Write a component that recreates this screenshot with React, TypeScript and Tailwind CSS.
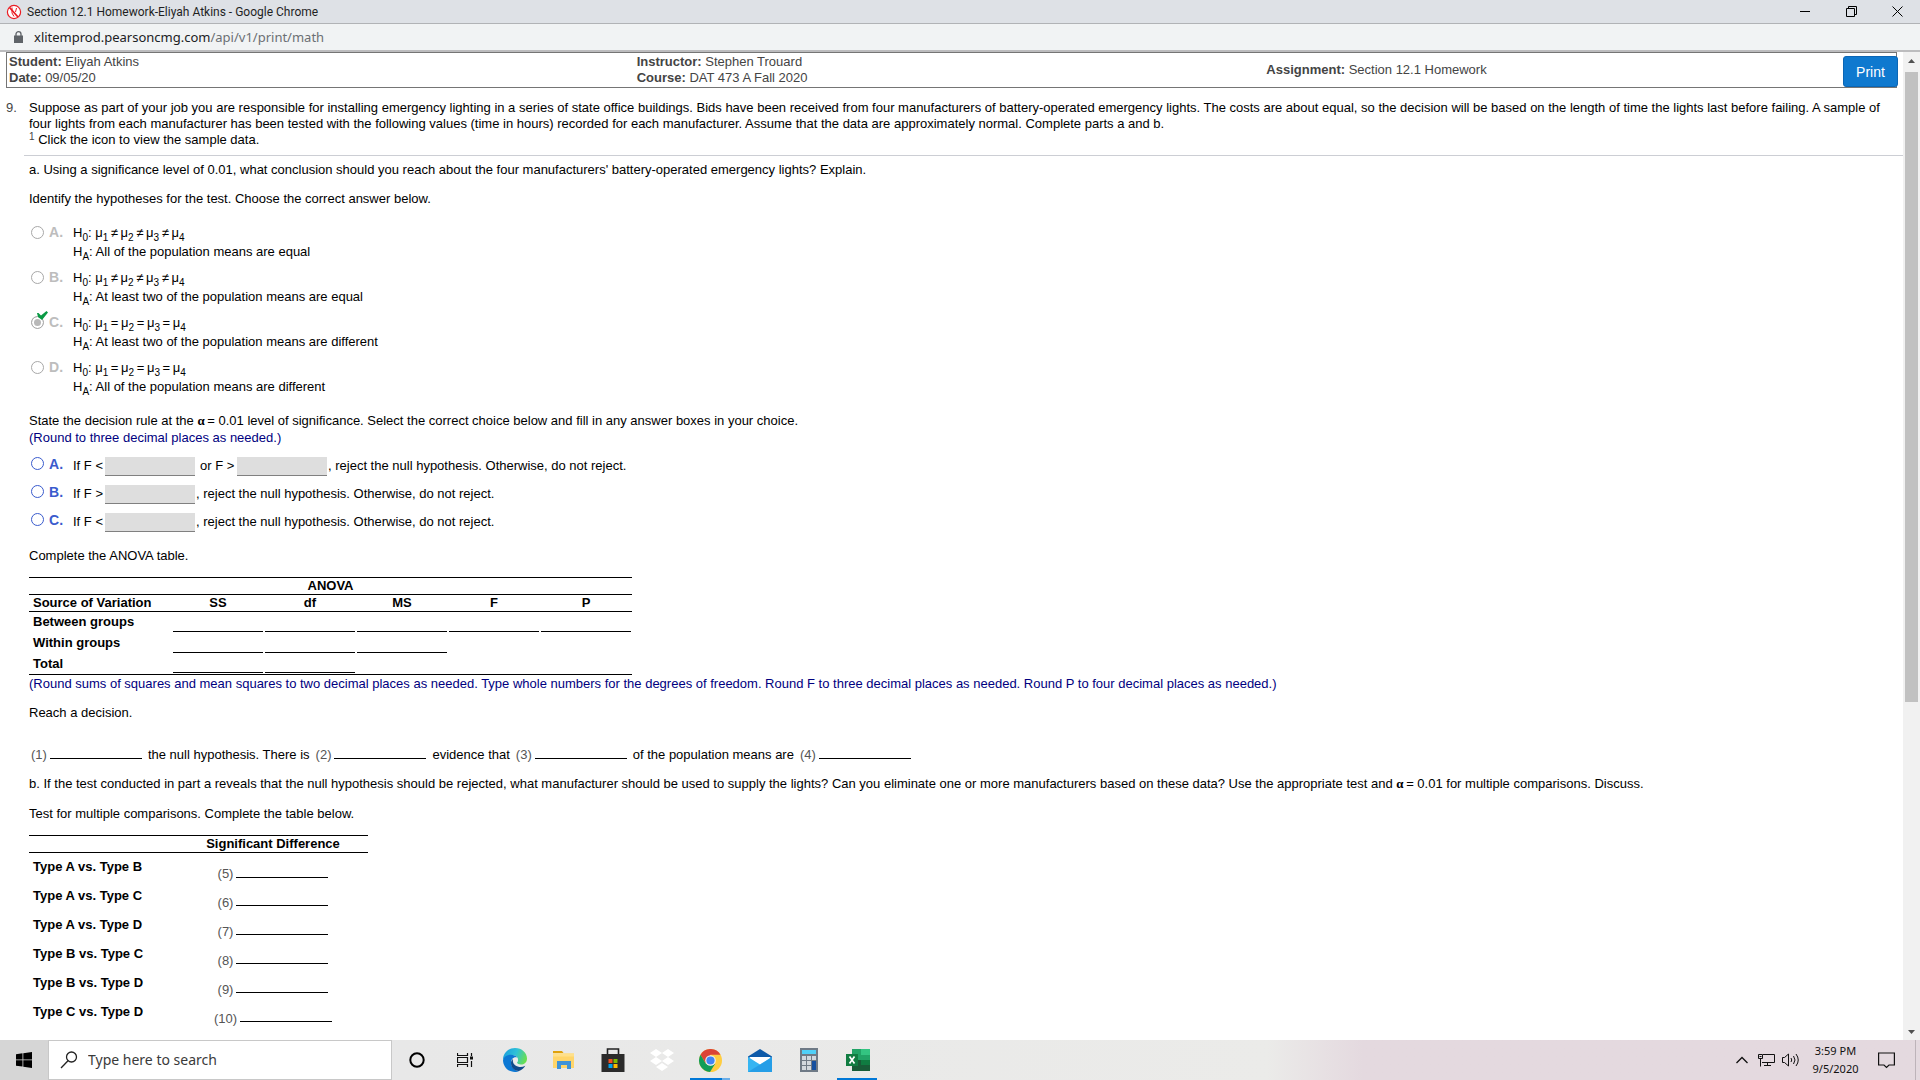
import type { ReactNode } from "react";

const anovaColumns = ["SS", "df", "MS", "F", "P"];
const anovaRows = [
  { label: "Between groups", blanks: 5 },
  { label: "Within groups", blanks: 3 },
  { label: "Total", blanks: 2 },
];
const hypotheses = [
  { letter: "A", sign: "≠", text: "All of the population means are equal" },
  { letter: "B", sign: "≠", text: "At least two of the population means are equal" },
  { letter: "C", sign: "=", text: "At least two of the population means are different", correct: true },
  { letter: "D", sign: "=", text: "All of the population means are different" },
];
const comparisons = [
  "Type A vs. Type B",
  "Type A vs. Type C",
  "Type A vs. Type D",
  "Type B vs. Type C",
  "Type B vs. Type D",
  "Type C vs. Type D",
];

function TitleBar() {
  return (
    <header className="flex h-6 shrink-0 items-center border-b border-[#b1b3b6] bg-[#dee1e6] pl-[6px] font-[Roboto,sans-serif] text-xs text-[#1f1f1f]">
      <svg viewBox="0 0 16 16" className="size-4" fill="none" stroke="#ea1d24">
        <circle cx="8" cy="8" r="6.6" strokeWidth="1.2" fill="#fff" />
        <path d="M3.5 3.500 12 13" strokeWidth="1.8" />
        <path d="M6 3.500v5.500l2 3.500M10.500 4 9.500 8" strokeWidth="1" />
      </svg>
      <h1 className="ml-[5px] flex-1">Section 12.1 Homework-Eliyah Atkins - Google Chrome</h1>
      <div className="flex h-full items-center text-black">
        <button aria-label="Minimize" className="flex w-[46px] justify-center">
          <svg width="10" height="10" viewBox="0 0 10 10" stroke="currentColor"><path d="M0 4.5h10" /></svg>
        </button>
        <button aria-label="Restore" className="flex w-[46px] justify-center">
          <svg width="11" height="11" viewBox="0 0 11 11" stroke="currentColor" fill="none">
            <path d="M.5 2.5h8v8h-8zM2.5 2.5v-2h8v8h-2" />
          </svg>
        </button>
        <button aria-label="Close" className="flex w-[46px] justify-center">
          <svg width="11" height="11" viewBox="0 0 11 11" stroke="currentColor"><path d="M.5.5l10 10M10.5.5l-10 10" /></svg>
        </button>
      </div>
    </header>
  );
}

function AddressBar() {
  return (
    <div className="flex h-7 shrink-0 items-center border-b-2 border-[#bcbcbe] bg-[#f1f3f4] pl-[14px] font-['Noto_Sans',sans-serif] text-[13px] text-[#202124]">
      <svg viewBox="0 0 9 12" className="h-3 w-[9px]" fill="none">
        <path d="M0 4.5h9V12H0z" fill="#5f6368" />
        <path d="M2 5V3a2.5 2.3 0 0 1 5 0v2" stroke="#5f6368" strokeWidth="1.3" />
      </svg>
      <p className="ml-[11px]">
        xlitemprod.pearsoncmg.com<span className="text-[#6b6f73]">/api/v1/print/math</span>
      </p>
    </div>
  );
}

function DocumentHeader() {
  return (
    <div className="mr-[6px] ml-[6px] flex h-9 items-start border border-[#757575] text-[#444]">
      <div className="w-1/3 pt-px pl-[2px]">
        <p><b>Student:</b> Eliyah Atkins</p>
        <p><b>Date:</b> 09/05/20</p>
      </div>
      <div className="w-1/3 pt-px">
        <p><b>Instructor:</b> Stephen Trouard</p>
        <p><b>Course:</b> DAT 473 A Fall 2020</p>
      </div>
      <p className="flex-1 pt-[9px]"><b>Assignment:</b> Section 12.1 Homework</p>
      <button className="-mr-[2px] mt-[3px] h-[31px] w-[55px] shrink-0 rounded-[3px] border border-[#0b66b5] bg-[#0f79cf] text-sm text-white">
        Print
      </button>
    </div>
  );
}

function Sub({ children }: { children: ReactNode }) {
  return <sub className="bottom-[-4px] text-[10px]">{children}</sub>;
}

function Means({ sign }: { sign: string }) {
  const gap = `\u2009${sign}\u2009`;
  return (
    <>
      H<Sub>0</Sub>: μ<Sub>1</Sub>{gap}μ<Sub>2</Sub>{gap}μ<Sub>3</Sub>{gap}μ<Sub>4</Sub>
    </>
  );
}

function HypothesisOption({ letter, sign, text, correct }: { letter: string; sign: string; text: string; correct?: boolean }) {
  return (
    <label className="flex h-[45px] items-start">
      <span className="relative mt-[3px] mr-[5px] ml-[2px] size-[13px]">
        <input
          type="radio"
          name="hypothesis"
          disabled
          defaultChecked={correct}
          className="block size-[13px] appearance-none rounded-full border border-[#a8a8a8] bg-white checked:bg-[#b8b8b8] checked:shadow-[inset_0_0_0_2px_white]"
        />
        {correct && (
          <svg viewBox="0 0 11 10" className="absolute -top-[5px] left-[6px] h-[10px] w-[11px]">
            <path d="M0 2l1.500 0 2.500 2.500L9.500 0l1.500 1.500L5 9 1 6z" fill="#0a9a44" />
          </svg>
        )}
      </span>
      <b className="w-6 text-sm leading-[19px] text-[#bdbdbd]">{letter}.</b>
      <span className="leading-[19px]">
        <Means sign={sign} />
        <br />
        H<Sub>A</Sub>: {text}
      </span>
    </label>
  );
}

function AnswerBox({ label }: { label: string }) {
  return <input type="text" aria-label={label} className="h-[19px] w-[90px] border-b border-[#808080] bg-[#dedede]" />;
}

function RuleOption({ letter, children }: { letter: string; children: ReactNode }) {
  return (
    <div className="flex h-7 items-center">
      <input
        type="radio"
        name="rule"
        aria-label={`Choice ${letter}`}
        className="mr-[5px] mb-[5px] ml-[2px] size-[13px] appearance-none rounded-full border border-[#3a5bcd] bg-white"
      />
      <b className="mb-[5px] w-6 text-sm leading-4 text-[#3a5bcd]">{letter}.</b>
      {children}
    </div>
  );
}

function Choice({ n }: { n: number }) {
  return (
    <label className="inline-flex items-center text-[#555]">
      ({n})
      <input type="text" className="ml-[3px] h-2 w-[92px] border-b border-black" />
    </label>
  );
}

function Alpha() {
  return <b className="font-['Liberation_Serif',serif]">α</b>;
}

function Question() {
  return (
    <main className="flex-1 bg-white text-black">
      <DocumentHeader />
      <div className="mt-3 flex pl-[6px]">
        <span className="w-[23px] text-[#444]">9.</span>
        <div className="flex-1 pr-2">
          <p>
            Suppose as part of your job you are responsible for installing emergency lighting in a series of state office
            buildings. Bids have been received from four manufacturers of battery-operated emergency lights. The costs are
            about equal, so the decision will be based on the length of time the lights last before failing. A sample of
            four lights from each manufacturer has been tested with the following values (time in hours) recorded for each
            manufacturer. Assume that the data are approximately normal. Complete parts a and b.
          </p>
          <p className="h-4">
            <sup className="-top-1 text-[10px] text-[#444]">1</sup> Click the icon to view the sample data.
          </p>
        </div>
      </div>
      <hr className="mt-[7px] ml-6 border-[#ccced4]" />
      <div className="pt-[6px] pl-[29px]">
        <p>
          a. Using a significance level of 0.01, what conclusion should you reach about the four manufacturers'
          battery-operated emergency lights? Explain.
        </p>
        <p className="mt-[13px]">Identify the hypotheses for the test. Choose the correct answer below.</p>
        <fieldset className="mt-4">
          {hypotheses.map((h) => (
            <HypothesisOption key={h.letter} {...h} />
          ))}
        </fieldset>
        <p className="mt-[10px]">
          State the decision rule at the <Alpha />{"\u2009"}= 0.01 level of significance. Select the correct choice below and
          fill in any answer boxes in your choice.
        </p>
        <p className="mt-px text-[#000080]">(Round to three decimal places as needed.)</p>
        <fieldset className="mt-[6px]">
          <RuleOption letter="A">
            <span className="w-8">If F &lt;</span>
            <AnswerBox label="Lower critical value" />
            <span className="w-[42px] pl-[5px]">or F &gt;</span>
            <AnswerBox label="Upper critical value" />
            <span className="pl-px">, reject the null hypothesis. Otherwise, do not reject.</span>
          </RuleOption>
          <RuleOption letter="B">
            <span className="w-8">If F &gt;</span>
            <AnswerBox label="Critical value" />
            <span className="pl-px">, reject the null hypothesis. Otherwise, do not reject.</span>
          </RuleOption>
          <RuleOption letter="C">
            <span className="w-8">If F &lt;</span>
            <AnswerBox label="Critical value" />
            <span className="pl-px">, reject the null hypothesis. Otherwise, do not reject.</span>
          </RuleOption>
        </fieldset>
        <p className="mt-3">Complete the ANOVA table.</p>
        <table className="mt-[13px] w-[603px] table-fixed border-collapse border-y border-black font-bold">
          <colgroup>
            <col className="w-[143px]" />
            <col span={5} />
          </colgroup>
          <thead>
            <tr className="border-b border-black">
              <th colSpan={6} className="h-[17px] leading-4">ANOVA</th>
            </tr>
            <tr className="border-b border-black">
              <th className="h-[17px] pl-1 text-left leading-4">Source of Variation</th>
              {anovaColumns.map((c) => (
                <th key={c} className="leading-4">{c}</th>
              ))}
            </tr>
          </thead>
          <tbody>
            {anovaRows.map((row) => (
              <tr key={row.label} className="h-[21px]">
                <th className="pl-1 text-left">{row.label}</th>
                {anovaColumns.map((c, i) => (
                  <td key={c} className="p-0 align-bottom">
                    {i < row.blanks && (
                      <input type="text" aria-label={`${row.label} ${c}`} className="mx-auto mb-px block h-4 w-[90px] border-b border-black" />
                    )}
                  </td>
                ))}
              </tr>
            ))}
          </tbody>
        </table>
        <p className="mt-px text-[#000080]">
          (Round sums of squares and mean squares to two decimal places as needed. Type whole numbers for the degrees of
          freedom. Round F to three decimal places as needed. Round P to four decimal places as needed.)
        </p>
        <p className="mt-[13px]">Reach a decision.</p>
        <div className="mt-[26px] flex items-center gap-[6px] pl-[2px]">
          <Choice n={1} /> the null hypothesis. There is <Choice n={2} /> evidence that <Choice n={3} /> of the population
          means are <Choice n={4} />
        </div>
        <p className="mt-[13px]">
          b. If the test conducted in part a reveals that the null hypothesis should be rejected, what manufacturer should be
          used to supply the lights? Can you eliminate one or more manufacturers based on these data? Use the appropriate test
          and <Alpha />{"\u2009"}= 0.01 for multiple comparisons. Discuss.
        </p>
        <p className="mt-[14px]">Test for multiple comparisons. Complete the table below.</p>
        <table className="mt-[13px] w-[339px] table-fixed border-collapse">
          <colgroup>
            <col className="w-[149px]" />
            <col />
          </colgroup>
          <thead>
            <tr className="border-y border-black">
              <td className="h-[17px]" />
              <th className="leading-4">Significant Difference</th>
            </tr>
          </thead>
          <tbody>
            {comparisons.map((c, i) => (
              <tr key={c} className="h-[29px]">
                <th className="pt-[6px] pl-1 text-left align-top">{c}</th>
                <td className="pt-[13px] text-center align-top leading-[15px]">
                  <Choice n={i + 5} />
                </td>
              </tr>
            ))}
          </tbody>
        </table>
      </div>
    </main>
  );
}

function ScrollBar() {
  return (
    <div className="flex w-[17px] shrink-0 flex-col items-center bg-[#f1f1f1]">
      <svg viewBox="0 0 17 20" className="h-5 w-[17px]"><path d="M5 11h7L8.500 7z" fill="#505050" /></svg>
      <div className="w-[13px] flex-[631] bg-[#c1c1c1]" />
      <div className="flex-[321]" />
      <svg viewBox="0 0 17 17" className="size-[17px]"><path d="M5 7h7l-3.500 4z" fill="#505050" /></svg>
    </div>
  );
}

function AppButton({ label, active, children }: { label: string; active?: string; children: ReactNode }) {
  return (
    <button aria-label={label} className="relative flex h-full w-[49px] items-center justify-center">
      {children}
      {active && <span className={active} />}
    </button>
  );
}

function Taskbar() {
  return (
    <footer className="flex h-10 shrink-0 items-center bg-linear-to-r from-[#e8e8e8] from-20% via-[#ebebe9] via-66% to-[#e4d9df] to-71% font-['Noto_Sans',sans-serif]">
      <button aria-label="Start" className="flex h-full w-12 items-center justify-center bg-[#d6d6d6]">
        <svg viewBox="0 0 16 16" className="size-4"><path d="M0 2.200 6.500 1.300v6.200H0zM7.300 1.200 16 0v7.500H7.300zM0 8.300h6.500v6.300L0 13.700zM7.300 8.300H16V16l-8.700-1.200z" /></svg>
      </button>
      <label className="flex h-full w-[344px] items-center border border-[#c8c8c8] bg-white pl-[11px]">
        <svg viewBox="0 0 18 18" className="size-[18px]" fill="none" stroke="#222" strokeWidth="1.300">
          <circle cx="11.500" cy="6" r="5" />
          <path d="M8 9.800 1 17" />
        </svg>
        <input type="text" aria-label="Search" placeholder="Type here to search" className="ml-[10px] flex-1 text-sm outline-none placeholder:text-[#3a3a3a]" />
      </label>
      <AppButton label="Cortana">
        <svg viewBox="0 0 16 16" className="size-4"><circle cx="8" cy="8" r="6.700" fill="none" stroke="#000" strokeWidth="2" /></svg>
      </AppButton>
      <AppButton label="Task View">
        <svg viewBox="0 0 17 16" className="h-4 w-[17px]" fill="none" stroke="#111">
          <path d="M.5 1v2.500h10V1M.5 15v-2.500h10V15M.5 5.500h10v5H.5zM14.500 1v3M14.500 9v6" strokeWidth="1.200" />
          <path d="M13 4.500h3v3h-3z" fill="#111" stroke="none" />
        </svg>
      </AppButton>
      <AppButton label="Edge">
        <svg viewBox="0 0 24 24" className="size-6">
          <defs>
            <linearGradient id="edgeTop" x1="0" x2="1" y1=".3" y2=".6">
              <stop stopColor="#1ba0dd" /><stop offset=".5" stopColor="#2fc1d8" /><stop offset="1" stopColor="#6be04c" />
            </linearGradient>
          </defs>
          <path d="M0 12C0 5 5.500 0 12 0c7 0 12 5 12 10.500 0 4-3 6-6 6-2.500 0-4-1-4-2 0-.7 1-1.300 1-3 0-2-2-4.500-6-4.500-4 0-7.500 1.800-9 5z" fill="url(#edgeTop)" />
          <path d="M0 12c1-3.300 4-5.200 8-5.200 2.500 0 5 1 6.300 2.700C11 8.500 8 11 8 14.500c0 5 4 8.500 8 8.500-1 .6-2.500 1-4 1C5 24 0 18.500 0 12z" fill="#0c78d4" />
          <path d="M10 11c-1.200 1-2 2.200-2 4 0 5 4 8.300 8 8 3-1 5.200-3.200 6.300-5.300-2 1.100-4 1.400-6 1.200C12 18.500 9 15 10 11z" fill="#114a8b" />
          <path d="M11 10c2-1 4 .5 4 2s-1 2-1 2.800c0 1.500 2.500 2.700 5.500 2.200-5 2-10-1.500-8.500-7z" fill="#ececec" />
        </svg>
      </AppButton>
      <AppButton label="File Explorer">
        <svg viewBox="0 0 22 18" className="h-[18px] w-[22px]">
          <path d="M0 0h9l1.500 2H0z" fill="#dfa10b" /><path d="M0 2.500h21V17H0z" fill="#ffd56a" />
          <path d="M0 2.500h21v3H0z" fill="#ffe08a" /><path d="M4 10h14v8h-4v-4H8v4H4z" fill="#3f93d8" />
        </svg>
      </AppButton>
      <AppButton label="Microsoft Store">
        <svg viewBox="0 0 24 24" className="size-6">
          <path d="M6.500 7V1h11v6" fill="none" stroke="#222" strokeWidth="1.600" /><path d="M.5 6h23v18H.5z" fill="#2b2b2b" />
          <path d="M7.500 11h4v4h-4z" fill="#f25022" /><path d="M12.500 11h4v4h-4z" fill="#7fba00" />
          <path d="M7.500 16h4v4h-4z" fill="#00a4ef" /><path d="M12.500 16h4v4h-4z" fill="#ffb900" />
        </svg>
      </AppButton>
      <AppButton label="Dropbox">
        <svg viewBox="0 0 24 22" className="h-[22px] w-6" fill="#fff">
          <path d="M6 0l6 4-6 4-6-4zM18 0l6 4-6 4-6-4zM6 8l6 4-6 4-6-4zM18 8l6 4-6 4-6-4zM12 14l6 4-6 4-6-4z" />
        </svg>
      </AppButton>
      <AppButton label="Chrome" active="absolute bottom-0 left-1 h-[2px] w-10 border-r-8 border-[#6aaee8] bg-[#0078d7]">
        <svg viewBox="0 0 24 24" className="size-[23px]">
          <circle cx="12" cy="12" r="12" fill="#ffcd40" />
          <path d="M1.600 6A12 12 0 0 1 22.400 6H12L7 15z" fill="#db4437" />
          <path d="M1.600 6A12 12 0 0 0 11.500 24L17 15 12 17l-5-2z" fill="#109d58" />
          <circle cx="12" cy="12" r="5.500" fill="#f1f1f1" /><circle cx="12" cy="12" r="4.300" fill="#4285f4" />
        </svg>
      </AppButton>
      <AppButton label="Mail">
        <svg viewBox="0 0 24 23" className="h-[23px] w-6">
          <path d="M0 7.500 12 0l12 7.500V9H0z" fill="#0d5aa8" /><path d="M1 8h22L12 17z" fill="#fff" />
          <path d="M0 8l12 7.500L24 8v15H0z" fill="#35b5f2" /><path d="M24 8v15H0z" fill="#1a8fe0" opacity=".6" />
        </svg>
      </AppButton>
      <AppButton label="Calculator">
        <svg viewBox="0 0 18 24" className="h-6 w-[18px]">
          <path d="M0 0h18v24H0z" fill="#6f7a86" /><path d="M2 2h14v4H2z" fill="#50d0f8" />
          <path d="M2 8h4v4H2zM7 8h4v4H7zM12 8h4v4h-4zM2 13h4v4H2zM7 13h4v4H7zM2 18h4v4H2zM7 18h4v4H7z" fill="#d2d8de" />
          <path d="M12 13h4v9h-4z" fill="#1650a0" />
        </svg>
      </AppButton>
      <AppButton label="Excel" active="absolute bottom-0 left-1 h-[2px] w-10 bg-[#0078d7]">
        <svg viewBox="0 0 24 22" className="h-[22px] w-6">
          <path d="M6 0h9v11H6z" fill="#21a366" /><path d="M15 0h9v6h-9z" fill="#33c481" /><path d="M15 6h9v5h-9z" fill="#21a366" />
          <path d="M6 11h18v11H6z" fill="#185c37" /><path d="M15 11h9v5h-9z" fill="#107c41" /><path d="M0 5h12v12H0z" fill="#107c41" />
          <path d="M3.500 7.500l5 7M8.500 7.500l-5 7" stroke="#fff" strokeWidth="1.700" />
        </svg>
      </AppButton>
      <div className="ml-auto flex h-full items-center">
        <button aria-label="Show hidden icons">
          <svg viewBox="0 0 12 8" className="h-2 w-3" fill="none" stroke="#111" strokeWidth="1.300"><path d="M.5 7 6 1.500 11.500 7" /></svg>
        </button>
        <button aria-label="Network" className="ml-[10px]">
          <svg viewBox="0 0 17 14" className="h-[14px] w-[17px]" fill="none" stroke="#111"><path d="M5 1.500h11.500v8H4M6 12.500h7M9.500 9.500v3M.5 1.500h4v4h-4zM2.500 5.500v8M1.500 3.500h2" /></svg>
        </button>
        <button aria-label="Volume" className="ml-[7px]">
          <svg viewBox="0 0 17 14" className="h-[14px] w-[17px]" fill="none" stroke="#111"><path d="M.5 4.500h2l4-3.500v12l-4-3.500h-2zM9 5q1.500 2 0 4M11.500 3q3 4 0 8M14 1q4.500 6 0 12" /></svg>
        </button>
        <div className="w-[73px] text-center text-[11px] leading-[18px] text-[#111]">
          <p>3:59 PM</p>
          <p>9/5/2020</p>
        </div>
        <button aria-label="Notifications" className="ml-[6px]">
          <svg viewBox="0 0 17 17" className="size-[17px]" fill="none" stroke="#111" strokeWidth="1.200"><path d="M.6 1h15.800v12H11l-2.500 2.500L6 13H.6z" /></svg>
        </button>
        <span className="mr-1 ml-5 h-full w-px bg-[#bdb3b9]" />
      </div>
    </footer>
  );
}

export default function App() {
  return (
    <div className="flex min-h-screen flex-col bg-white font-['Liberation_Sans',Arial,sans-serif] text-[13px] leading-4">
      <TitleBar />
      <AddressBar />
      <div className="flex flex-1">
        <Question />
        <ScrollBar />
      </div>
      <Taskbar />
    </div>
  );
}
